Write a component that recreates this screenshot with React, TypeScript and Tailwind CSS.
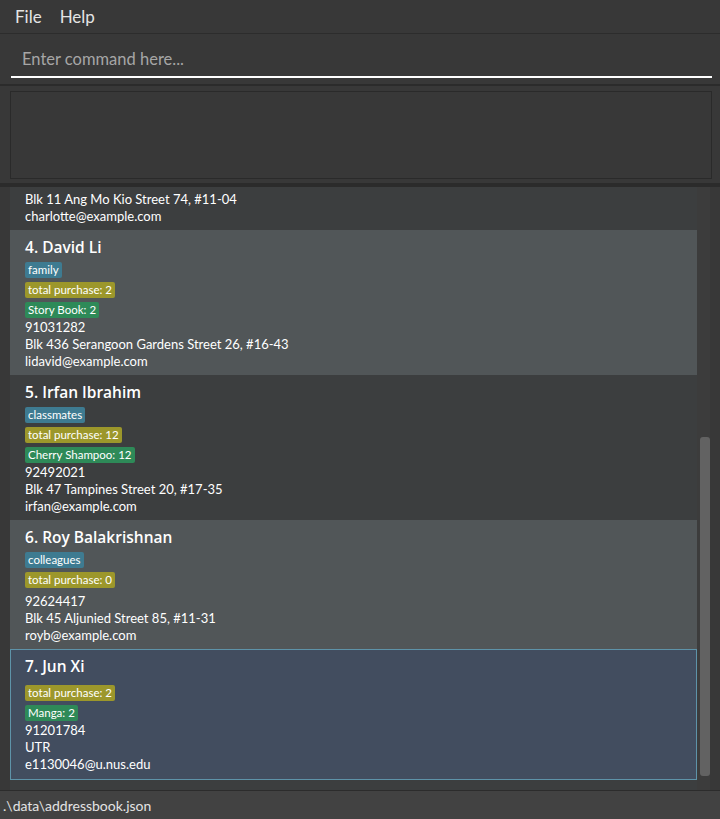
import { useEffect, useRef } from "react";

type Person = {
  name: string;
  tags: string[];
  total: number;
  items: string[];
  phone: string;
  address: string;
  email: string;
};

// only the people that reach the visible part of the list
const people: Person[] = [
  {
    name: "Charlotte Oliveiro",
    tags: ["neighbours"],
    total: 0,
    items: [],
    phone: "93210283",
    address: "Blk 11 Ang Mo Kio Street 74, #11-04",
    email: "charlotte@example.com",
  },
  {
    name: "David Li",
    tags: ["family"],
    total: 2,
    items: ["Story Book: 2"],
    phone: "91031282",
    address: "Blk 436 Serangoon Gardens Street 26, #16-43",
    email: "lidavid@example.com",
  },
  {
    name: "Irfan Ibrahim",
    tags: ["classmates"],
    total: 12,
    items: ["Cherry Shampoo: 12"],
    phone: "92492021",
    address: "Blk 47 Tampines Street 20, #17-35",
    email: "irfan@example.com",
  },
  {
    name: "Roy Balakrishnan",
    tags: ["colleagues"],
    total: 0,
    items: [],
    phone: "92624417",
    address: "Blk 45 Aljunied Street 85, #11-31",
    email: "royb@example.com",
  },
  {
    name: "Jun Xi",
    tags: [],
    total: 2,
    items: ["Manga: 2"],
    phone: "91201784",
    address: "UTR",
    email: "e1130046@u.nus.edu",
  },
];

const FIRST_INDEX = 3;

function TagRow({ labels, color }: { labels: string[]; color: string }) {
  if (labels.length === 0) return <div className="h-[4px]" />;
  return (
    <div className="flex flex-wrap gap-[4px] pt-[3px] pb-[1px]">
      {labels.map((l) => (
        <span
          key={l}
          className={`h-[16px] px-[3px] rounded-[2px] text-[11.5px] leading-[16px] text-white ${color}`}
        >
          {l}
        </span>
      ))}
    </div>
  );
}

function PersonCard({
  person,
  index,
  selected,
}: {
  person: Person;
  index: number;
  selected: boolean;
}) {
  const bg = selected
    ? "bg-[#424d5f] ring-1 ring-inset ring-[#5e93a9] pb-[7px]"
    : index % 2 === 0
      ? "bg-[#515658] pb-[5px]"
      : "bg-[#3c3e3f] pb-[5px]";

  return (
    <div className={`shrink-0 pl-[15px] pt-[6px] ${bg}`}>
      <div className="h-[23px] text-[15.5px] leading-[23px] font-semibold text-white font-['Open_Sans',sans-serif]">
        {index}. {person.name}
      </div>
      <TagRow labels={person.tags} color="bg-[#3e7b91]" />
      <TagRow
        labels={[`total purchase: ${person.total}`]}
        color="bg-[#9c972b]"
      />
      <TagRow labels={person.items} color="bg-[#2e8a58]" />
      <div className="text-[13px] leading-[17px] text-white">
        <div>{person.phone}</div>
        <div>{person.address}</div>
        <div>{person.email}</div>
      </div>
    </div>
  );
}

export default function App() {
  const listRef = useRef<HTMLDivElement>(null);

  /* KEEP LIST SCROLLED TO THE LAST PERSON */
  useEffect(() => {
    const el = listRef.current;
    if (el) el.scrollTop = el.scrollHeight;
  }, []);

  return (
    <div className="w-[720px] h-[819px] flex flex-col overflow-hidden bg-[#383838] font-['Segoe_UI',Lato,'Noto_Sans',sans-serif] select-none">
      {/* MENU */}
      <div className="h-[34px] shrink-0 flex items-center gap-[18px] pl-[15px] border-b border-[#2c2c2c] text-[17px] text-[#e4e4e4]">
        <span>File</span>
        <span>Help</span>
      </div>

      {/* COMMAND BOX */}
      <div className="h-[50px] shrink-0 pl-[11px] pr-[8px] pt-[8px]">
        <div className="h-[36px] flex items-center pl-[11px] border-b-2 border-white text-[16.5px] text-[#a6a6a6]">
          Enter command here...
        </div>
      </div>

      <div className="h-[2px] shrink-0 bg-[#2b2b2b]" />

      {/* RESULT DISPLAY */}
      <div className="h-[97px] shrink-0 pt-[5px] pb-[4px] pl-[10px] pr-[8px]">
        <div className="h-full border border-[#2a2a2a] bg-[#383838]" />
      </div>

      <div className="h-[4px] shrink-0 bg-[#2b2b2b]" />

      {/* PERSON LIST */}
      <div className="flex-1 min-h-0 flex pl-[10px] pr-[10px]">
        <div
          ref={listRef}
          className="flex-1 min-w-0 flex flex-col overflow-hidden bg-[#3c3e3f] pt-[2px]"
        >
          {people.map((p, i) => (
            <PersonCard
              key={p.name}
              person={p}
              index={i + FIRST_INDEX}
              selected={i === people.length - 1}
            />
          ))}
          <div className="h-[10px] shrink-0" />
        </div>
        <div className="w-[13px] shrink-0 flex flex-col justify-end items-end bg-[#3c3c3c] pb-[14px]">
          <div className="h-[339px] w-[10px] rounded-[3px] bg-[#626262]" />
        </div>
      </div>

      {/* STATUS BAR */}
      <div className="h-[29px] shrink-0 flex items-center pl-[3px] border-t border-[#2c2c2c] bg-[#424242] text-[14px] text-[#e4e4e4]">
        .\data\addressbook.json
      </div>
    </div>
  );
}
